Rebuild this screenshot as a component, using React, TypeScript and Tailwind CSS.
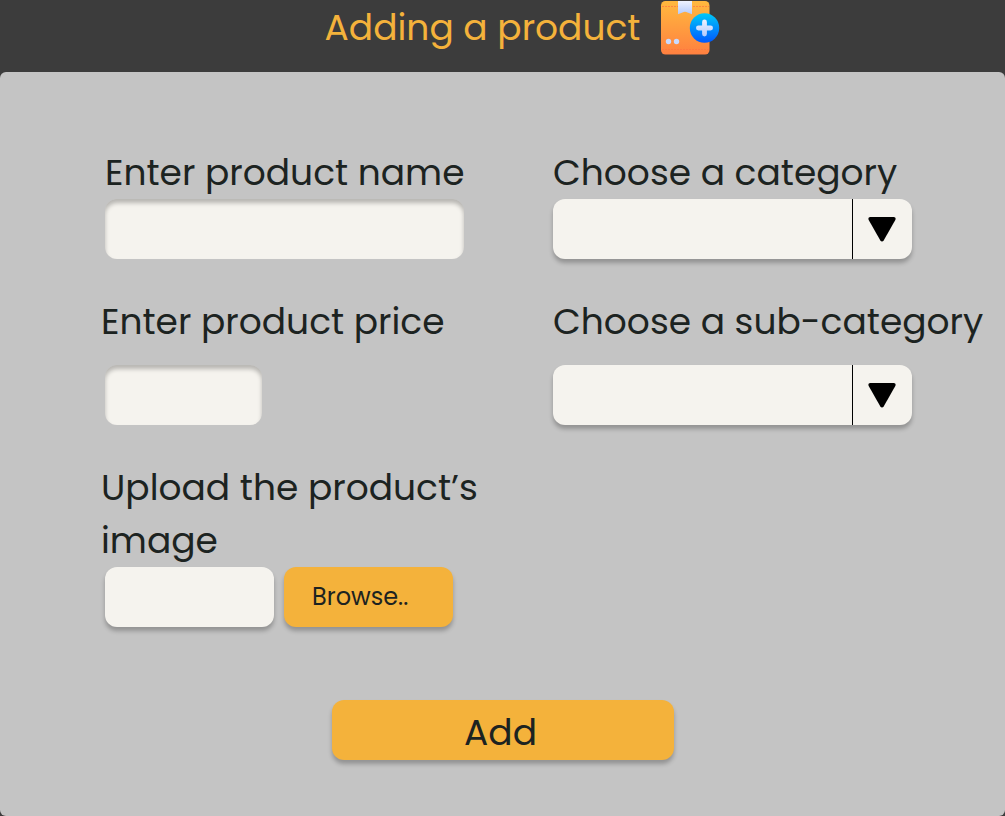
import type { ReactNode } from "react";

const labelClass = "block whitespace-nowrap text-4xl leading-[53px]";
const insetField =
  "block h-[60px] rounded-xl bg-[#f5f3ee] px-4 text-2xl shadow-[inset_0_4px_4px_rgba(0,0,0,0.25)] outline-none";
const raised = "shadow-[0_4px_4px_rgba(0,0,0,0.25)]";

function PackageIcon() {
  return (
    <svg width="60" height="56" viewBox="0 0 60 56" fill="none" aria-hidden="true" className="shrink-0">
      <defs>
        <linearGradient id="box" x1="0" y1="0" x2="0" y2="1">
          <stop stopColor="#ffb93e" />
          <stop offset="1" stopColor="#ff8040" />
        </linearGradient>
        <linearGradient id="ribbon" x1="0" y1="0" x2="0" y2="1">
          <stop stopColor="#eef3ff" />
          <stop offset="1" stopColor="#b3cafc" />
        </linearGradient>
        <linearGradient id="badge" x1="0" y1="0" x2="0" y2="1">
          <stop stopColor="#00c8f8" />
          <stop offset="1" stopColor="#0058ff" />
        </linearGradient>
      </defs>
      <rect x="1" y="1" width="48.5" height="53.5" rx="4.5" fill="url(#box)" />
      <path d="M2 6.5H18M33 6.5H49M2 49.5H49" stroke="#ff7340" strokeOpacity="0.7" strokeWidth="1" strokeDasharray="2 1" />
      <path d="M18 1H32V14.2L26.2 11.9Q25 11.4 23.8 11.9L18 14.2Z" fill="url(#ribbon)" />
      <circle cx="8.5" cy="41.5" r="2.7" fill="#c9d9ff" />
      <circle cx="16.5" cy="41.5" r="2.7" fill="#c9d9ff" />
      <circle cx="44.5" cy="28" r="14.7" fill="url(#badge)" />
      <path
        d="M44.5 19.5a2.4 2.4 0 0 1 2.4 2.4v3.7h3.7a2.4 2.4 0 0 1 0 4.8h-3.7v3.7a2.4 2.4 0 0 1-4.8 0v-3.7h-3.7a2.4 2.4 0 0 1 0-4.8h3.7v-3.7a2.4 2.4 0 0 1 2.4-2.4Z"
        fill="url(#ribbon)"
      />
    </svg>
  );
}

function Select({ id }: { id: string }) {
  return (
    <div className={`relative rounded-xl bg-[#f5f3ee] ${raised}`}>
      <select id={id} className="block h-[60px] w-full appearance-none rounded-xl bg-transparent pl-4 pr-16 text-2xl outline-none" />
      <span className="pointer-events-none absolute inset-y-0 right-0 flex w-[60px] items-center justify-center border-l border-black pr-0.5">
        <svg width="28" height="25" viewBox="0 0 28 25" aria-hidden="true">
          <path d="M2.2 0H25.8Q28.4 .3 27.3 3L15.8 23.2Q14 25.6 12.2 23.2L.7 3Q-.4 .3 2.2 0Z" fill="#000" />
        </svg>
      </span>
    </div>
  );
}

function Label({ htmlFor, className = "", children }: { htmlFor: string; className?: string; children: ReactNode }) {
  return (
    <label htmlFor={htmlFor} className={`${labelClass} ${className}`}>
      {children}
    </label>
  );
}

export default function App() {
  return (
    <div className="flex min-h-screen flex-col bg-[#3c3c3c] font-['Poppins','Inter',sans-serif] text-[#1c2321]">
      <header className="flex h-[72px] items-start justify-center gap-5 pl-10">
        <h1 className="text-4xl leading-[56px] text-[#f4b23b]">Adding a product</h1>
        <PackageIcon />
      </header>

      <form
        className="flex grow flex-col rounded-md bg-[#c4c4c4] pb-14 pt-[74px]"
        onSubmit={(e) => e.preventDefault()}
      >
        <div className="grid grid-cols-2 gap-x-[89px] gap-y-9 pl-[105px] pr-[93px]">
          <div>
            <Label htmlFor="name">Enter product name</Label>
            <input id="name" type="text" className={`${insetField} w-full`} />
          </div>
          <div>
            <Label htmlFor="category">Choose a category</Label>
            <Select id="category" />
          </div>
          <div className="flex flex-col gap-[17px]">
            <Label htmlFor="price" className="-ml-1">
              Enter product price
            </Label>
            <input id="price" type="text" inputMode="decimal" className={`${insetField} w-[157px]`} />
          </div>
          <div className="flex flex-col gap-[17px]">
            <Label htmlFor="subcategory">Choose a sub-category</Label>
            <Select id="subcategory" />
          </div>
          <div>
            <Label htmlFor="image" className="-ml-1">
              Upload the product’s
              <br />
              image
            </Label>
            <div className="flex gap-2.5">
              <input
                id="image"
                type="text"
                readOnly
                className={`block h-[60px] w-[169px] rounded-xl bg-[#f5f3ee] px-4 text-2xl outline-none ${raised}`}
              />
              <button type="button" className={`h-[60px] w-[169px] rounded-xl bg-[#f4b23b] pl-7 text-left text-2xl ${raised}`}>
                Browse..
              </button>
            </div>
          </div>
        </div>

        <button
          type="submit"
          className={`mt-[73px] h-[60px] w-[342px] self-center rounded-xl bg-[#f4b23b] pr-1 pt-1.5 text-4xl leading-[54px] ${raised}`}
        >
          Add
        </button>
      </form>
    </div>
  );
}
